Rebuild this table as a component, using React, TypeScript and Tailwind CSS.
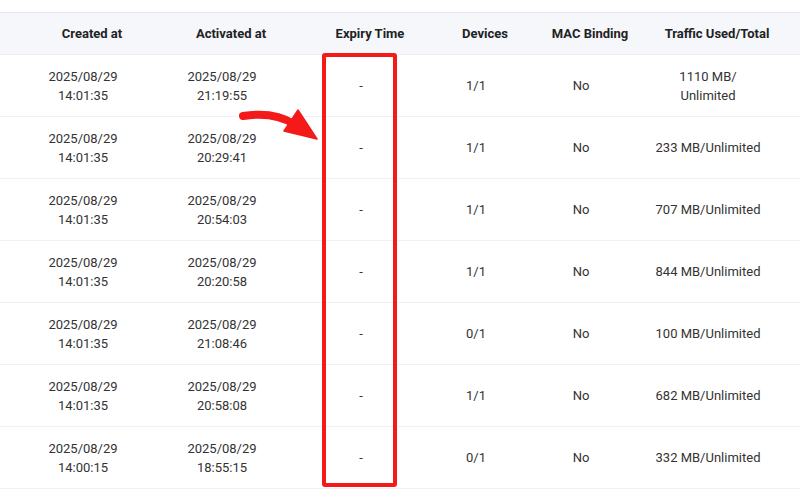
import React from 'react'

type Row = {
    created: [string, string]
    activated: [string, string]
    devices: string
    mac: string
    traffic: string
}

const rows: Row[] = [
    { created: ['2025/08/29', '14:01:35'], activated: ['2025/08/29', '21:19:55'], devices: '1/1', mac: 'No', traffic: '1110 MB/\nUnlimited' },
    { created: ['2025/08/29', '14:01:35'], activated: ['2025/08/29', '20:29:41'], devices: '1/1', mac: 'No', traffic: '233 MB/Unlimited' },
    { created: ['2025/08/29', '14:01:35'], activated: ['2025/08/29', '20:54:03'], devices: '1/1', mac: 'No', traffic: '707 MB/Unlimited' },
    { created: ['2025/08/29', '14:01:35'], activated: ['2025/08/29', '20:20:58'], devices: '1/1', mac: 'No', traffic: '844 MB/Unlimited' },
    { created: ['2025/08/29', '14:01:35'], activated: ['2025/08/29', '21:08:46'], devices: '0/1', mac: 'No', traffic: '100 MB/Unlimited' },
    { created: ['2025/08/29', '14:01:35'], activated: ['2025/08/29', '20:58:08'], devices: '1/1', mac: 'No', traffic: '682 MB/Unlimited' },
    { created: ['2025/08/29', '14:00:15'], activated: ['2025/08/29', '18:55:15'], devices: '0/1', mac: 'No', traffic: '332 MB/Unlimited' },
]

// header cells sit a little to the right of the body cells
const headCols = 'grid grid-cols-[23px_138px_140px_138px_92px_118px_136px]'
const bodyCols = 'grid grid-cols-[14px_138px_140px_138px_92px_118px_136px]'

export default function App() {
    return (
        <div className="relative w-[800px] h-[495px] bg-white overflow-hidden font-['Roboto',sans-serif] text-[13px]">
            <div className="h-3" />

            {/* Header */}
            <div className={`${headCols} h-[43px] items-center bg-[#f5f7fa] border-t border-[#e3e6ea] border-b border-b-[#eceef1] font-bold text-[#222] text-center`}>
                <div />
                <div>Created at</div>
                <div>Activated at</div>
                <div>Expiry Time</div>
                <div>Devices</div>
                <div>MAC Binding</div>
                <div>Traffic Used/Total</div>
            </div>

            {/* Body rows */}
            {rows.map((row, i) => (
                <div key={i} className={`${bodyCols} h-[62px] items-center border-b border-[#eff1f4] text-[#333] text-center leading-[19px]`}>
                    <div />
                    <div>
                        <div>{row.created[0]}</div>
                        <div>{row.created[1]}</div>
                    </div>
                    <div>
                        <div>{row.activated[0]}</div>
                        <div>{row.activated[1]}</div>
                    </div>
                    <div>-</div>
                    <div>{row.devices}</div>
                    <div>{row.mac}</div>
                    <div className="whitespace-pre-line">{row.traffic}</div>
                </div>
            ))}

            {/* Highlight box */}
            <div className="absolute left-[322px] top-[53px] w-[75px] h-[434px] border-4 border-[#f41a1a] rounded-[3px]" />

            {/* Arrow */}
            <svg className="absolute left-[230px] top-[100px]" width="95" height="50" viewBox="0 0 95 50">
                <path d="M13 16 C 32 13, 50 15, 64 24" fill="none" stroke="#f41a1a" strokeWidth="8" strokeLinecap="round" />
                <polygon points="68,10 87,39 54,31" fill="#f41a1a" strokeLinejoin="round" stroke="#f41a1a" strokeWidth="1.5" />
            </svg>
        </div>
    )
}
